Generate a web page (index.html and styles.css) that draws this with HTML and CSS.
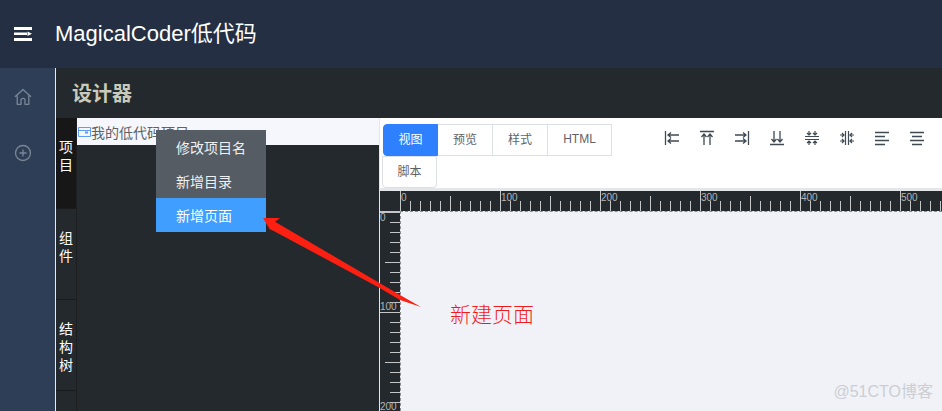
FILE: index.html
```html
<!DOCTYPE html>
<html lang="zh">
<head>
<meta charset="utf-8">
<title>MagicalCoder低代码</title>
<link rel="stylesheet" href="styles.css">
</head>
<body>
<div class="app">
  <header class="top">
    <svg class="burger" width="18" height="15" viewBox="0 0 18 15"><path d="M0 0h18v3H0zM0 5.500h13v2.500H0zM0 11h18v3H0zM13.500 4.500l4.500 2.300-4.500 2.300z" fill="#fff"/></svg>
    <h1 class="brand">MagicalCoder低代码</h1>
  </header>
  <div class="body">
    <nav class="side">
      <svg class="side-icon" width="18" height="18" viewBox="0 0 18 18"><path d="M1 8.800 9 1.500l8 7.300M3.200 7.500v8.800h3.800v-4a2 2 0 0 1 4 0v4h3.800V7.500" fill="none" stroke="#7b8695" stroke-width="1.300" stroke-linejoin="round"/></svg>
      <svg class="side-icon" width="18" height="18" viewBox="0 0 18 18"><circle cx="9" cy="9" r="7.500" fill="none" stroke="#7b8695" stroke-width="1.300"/><path d="M9 5.500v7M5.500 9h7" stroke="#7b8695" stroke-width="1.300"/></svg>
    </nav>
    <main class="main">
      <div class="title">设计器</div>
      <div class="work">
        <div class="tabs">
          <div class="tab active">项目</div>
          <div class="tab">组件</div>
          <div class="tab">结构树</div>
        </div>
        <section class="tree">
          <div class="tree-row">
            <svg width="13" height="11" viewBox="0 0 13 11"><path d="M.5 1.500h12v9H.5zM.5 4.500h12" fill="none" stroke="#5f9cf5"/><rect x="7" y="5.500" width="3" height="2" fill="#5f9cf5"/></svg>
            <span>我的低代码项目</span>
          </div>
          <ul class="menu">
            <li>修改项目名</li>
            <li>新增目录</li>
            <li class="hover">新增页面</li>
          </ul>
        </section>
        <section class="designer">
          <div class="toolbar">
            <div class="modes">
              <button class="mode on">视图</button><button class="mode">预览</button><button class="mode">样式</button><button class="mode wide">HTML</button><button class="mode solo">脚本</button>
            </div>
            <div class="aligns">
              <svg width="16" height="16" viewBox="0 0 16 16"><path d="M1.500 1v14M15 5H4M7 2.500 4 5l3 2.500M15 11H4M7 8.500 4 11l3 2.500" fill="none" stroke="#3f4a52" stroke-width="1.300"/></svg>
              <svg width="16" height="16" viewBox="0 0 16 16"><path d="M1 1.500h14M5 15V4M2.500 7 5 4l2.500 3M11 15V4M8.500 7 11 4l2.500 3" fill="none" stroke="#3f4a52" stroke-width="1.300"/></svg>
              <svg width="16" height="16" viewBox="0 0 16 16"><path d="M14.500 1v14M1 5h11M9 2.500 12 5 9 7.500M1 11h11M9 8.500l3 2.500-3 2.500" fill="none" stroke="#3f4a52" stroke-width="1.300"/></svg>
              <svg width="16" height="16" viewBox="0 0 16 16"><path d="M1 14.500h14M5 1v11M2.500 9 5 12l2.500-3M11 1v11M8.500 9l2.500 3 2.500-3" fill="none" stroke="#3f4a52" stroke-width="1.300"/></svg>
              <svg width="16" height="16" viewBox="0 0 16 16"><path d="M1 6.500h14M1 9.500h14M5 1v4M3 3l2 2 2-2M11 1v4M9 3l2 2 2-2M5 15v-4M3 13l2-2 2 2M11 15v-4M9 13l2-2 2 2" fill="none" stroke="#3f4a52" stroke-width="1.200"/></svg>
              <svg width="16" height="16" viewBox="0 0 16 16"><path d="M6.500 1v14M9.500 1v14M1 5h4M3 3l2 2-2 2M1 11h4M3 9l2 2-2 2M15 5h-4M13 3l-2 2 2 2M15 11h-4M13 9l-2 2 2 2" fill="none" stroke="#3f4a52" stroke-width="1.200"/></svg>
              <svg width="16" height="16" viewBox="0 0 16 16"><path d="M1 2.500h14M1 6.500h10M1 10.500h14M1 14.500h10" fill="none" stroke="#3f4a52" stroke-width="1.300"/></svg>
              <svg width="16" height="16" viewBox="0 0 16 16"><path d="M1 2.500h14M3 6.500h10M1 10.500h14M3 14.500h10" fill="none" stroke="#3f4a52" stroke-width="1.300"/></svg>
            </div>
          </div>
          <div class="stage">
            <svg class="ruler-top" width="562" height="21" viewBox="0 0 562 21">
              <defs>
                <pattern id="rt" width="100" height="20" patternUnits="userSpaceOnUse" x="20">
                  <path d="M.5 0v20M10.500 10v10M20.500 10v10M30.500 10v10M40.500 10v10M50.500 5v15M60.500 10v10M70.500 10v10M80.500 10v10M90.500 10v10" stroke="#c4c6c8"/>
                </pattern>
              </defs>
              <rect x="20" width="542" height="20" fill="url(#rt)"/>
              <path d="M0 20.500h20" stroke="#c4c6c8"/>
              <g class="rule-num">
                <text x="21" y="10">0</text><text x="121" y="10">100</text><text x="221" y="10">200</text><text x="321" y="10">300</text><text x="421" y="10">400</text><text x="521" y="10">500</text>
              </g>
            </svg>
            <div class="stage-low">
              <svg class="ruler-left" width="20" height="200" viewBox="0 0 20 200">
                <defs>
                  <pattern id="rl" width="20" height="100" patternUnits="userSpaceOnUse">
                    <path d="M0 .5h20M10 10.500h10M10 20.500h10M10 30.500h10M10 40.500h10M5 50.500h15M10 60.500h10M10 70.500h10M10 80.500h10M10 90.500h10" stroke="#c4c6c8"/>
                  </pattern>
                </defs>
                <rect width="20" height="200" fill="url(#rl)"/>
                <g class="rule-num">
                  <text x="0" y="9">0</text><text x="0" y="98">100</text><text x="0" y="198">200</text>
                </g>
              </svg>
              <div class="canvas"></div>
            </div>
          </div>
        </section>
      </div>
    </main>
  </div>
  <svg class="arrow" width="942" height="411" viewBox="0 0 942 411"><path d="M263 218 280 218 275 221.700 400 295 421 307 400 300 379.300 287.700 270 229 272 233z" fill="#fb2012"/></svg>
  <div class="note">新建页面</div>
  <div class="mark">@51CTO博客</div>
</div>
</body>
</html>
```
FILE: styles.css
```css
* { box-sizing: border-box; }
html, body { margin: 0; padding: 0; }
body {
  width: 942px;
  height: 411px;
  overflow: hidden;
  background: #24292d;
  font-family: "Liberation Sans", "Noto Sans CJK SC", sans-serif;
}
.app { position: relative; width: 942px; height: 411px; display: flex; flex-direction: column; overflow: hidden; }
.top { height: 68px; flex: none; background: #252f43; display: flex; align-items: center; padding-left: 14px; gap: 23px; }
.burger { flex: none; margin-top: 1px; }
.brand { margin: 0; font-size: 22px; font-weight: 400; color: #fff; line-height: 1; }
.body { flex: 1; display: flex; min-height: 0; }
.side { width: 56px; flex: none; background: #2f3e57; border-right: 1px solid #e8eaee; display: flex; flex-direction: column; align-items: center; padding: 20px 9px 0 0; gap: 38px; }
.side-icon { display: block; }
.main { flex: 1; min-width: 0; display: flex; flex-direction: column; }
.title { height: 50px; flex: none; background: #24292d; color: #c9cabb; font-size: 20px; font-weight: 700; line-height: 52px; padding-left: 16px; }
.work { flex: 1; min-height: 0; display: flex; }
.tabs { width: 21px; flex: none; background: #24292d; border-right: 1px solid #1c1e20; }
.tab { height: 91px; padding: 20px 3px 0; font-size: 14px; line-height: 18px; color: #fff; border-bottom: 1px solid #1a1b1d; }
.tab.active { background: #171717; }
.tree { position: relative; width: 303px; flex: none; background: #24292d; border-right: 1px solid #e4e6ea; }
.tree-row { height: 27px; background: #f5f7fc; display: flex; align-items: center; padding-left: 1px; font-size: 14px; color: #606266; }
.tree-row svg { flex: none; }
.menu { position: absolute; left: 79px; top: 12px; width: 110px; margin: 0; padding: 0; list-style: none; background: #555c63; }
.menu li { height: 34px; line-height: 35px; padding: 1px 0 0 20px; font-size: 14px; color: #eef0f2; }
.menu li.hover { background: #409eff; color: #fff; }
.designer { flex: 1; min-width: 0; display: flex; flex-direction: column; }
.toolbar { height: 70px; flex: none; background: #fff; display: flex; padding: 6px 0 0 2px; }
.modes { width: 232px; flex: none; display: flex; flex-wrap: wrap; align-content: flex-start; }
.mode { height: 32px; width: 55px; padding: 0 0 3px; margin: 0; background: #fff; border: 1px solid #dcdfe6; border-left: 0; font: 12px "Liberation Sans", "Noto Sans CJK SC", sans-serif; color: #606266; }
.mode.on { width: 55px; background: #2f80ff; border: 1px solid #2f80ff; border-radius: 4px 0 0 4px; color: #fff; margin-left: 1px; }
.mode.wide { width: 64px; }
.mode.solo { border-left: 1px solid #dcdfe6; border-radius: 0 0 4px 4px; border-top-color: #dcdfe6; }
.aligns { display: flex; gap: 19px; padding: 6px 0 0 50px; }
.aligns svg { flex: none; display: block; }
.stage { flex: 1; min-height: 0; border-top: 3px solid #e4e6ea; display: flex; flex-direction: column; background: #24292d; }
.ruler-top { flex: none; display: block; }
.stage-low { flex: 1; min-height: 0; display: flex; }
.ruler-left { flex: none; display: block; }
.canvas { flex: 1; background: #f1f2f7; border-top: 1px dashed #8b8d90; border-left: 1px dashed #8b8d90; margin-top: -1px; }
.rule-num { font: 10px "Liberation Sans", sans-serif; fill: #b4b6b8; }
.arrow { position: absolute; left: 0; top: 0; pointer-events: none; }
.note { position: absolute; left: 450px; top: 300px; font-size: 21px; line-height: 30px; color: #f01c1c; font-weight: 300; }
.mark { position: absolute; right: 9px; top: 383px; font-size: 16px; line-height: 18px; color: #ccced3; }
```
